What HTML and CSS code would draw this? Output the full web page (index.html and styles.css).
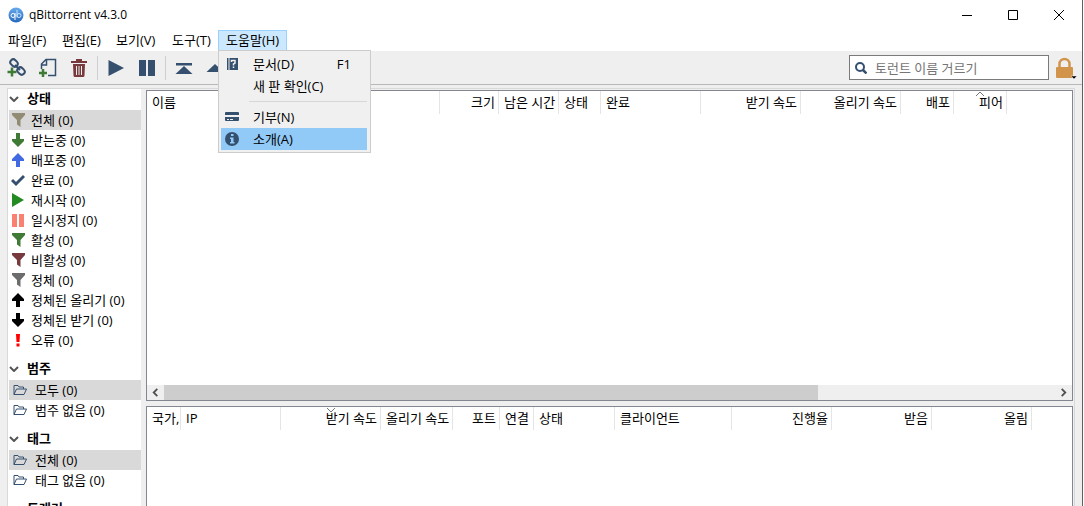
FILE: index.html
```html
<!DOCTYPE html>
<html lang="ko">
<head>
	<meta charset="UTF-8">
	<title>qBittorrent v4.3.0</title>
	<link rel="stylesheet" href="styles.css">
</head>

<body>
	<!-- 공용 아이콘 -->
	<svg class="sprite" aria-hidden="true">
		<symbol id="i-filter" viewBox="0 0 14 14"><path d="M1 0h13v2L9.500 7v7L6 11.500V7L1 2z"/></symbol>
		<symbol id="i-down" viewBox="0 0 14 14"><path d="M5 0h4v6h4v2l-6 6-6-6V6h4z"/></symbol>
		<symbol id="i-up" viewBox="0 0 14 14"><path d="M5 14h4V8h4V6L7 0 1 6v2h4z"/></symbol>
		<symbol id="i-folder" viewBox="0 0 14 14"><path d="M1 11.500V2.500h4l1 1.500h4.500V6M1 11.500L3.500 6h10L11 11.500z" fill="none" stroke="currentColor" stroke-linejoin="round"/></symbol>
		<symbol id="i-arrow" viewBox="0 0 10 6"><path d="M1 1l4 4 4-4" fill="none" stroke="currentColor" stroke-width="2"/></symbol>
	</svg>

	<div class="window">
		<header class="titlebar">
			<svg class="logo" viewBox="0 0 16 16">
				<defs><linearGradient id="lg" x2="0" y2="1"><stop offset="0" stop-color="#68aaed"/><stop offset="1" stop-color="#2869bd"/></linearGradient></defs>
				<circle cx="8" cy="8" r="7.500" fill="url(#lg)"/>
				<circle cx="5" cy="8.500" r="2" fill="none" stroke="#fff"/>
				<path d="M7 6v7" stroke="#fff"/>
				<circle cx="11" cy="8.500" r="2" fill="none" stroke="#c8e8ff"/>
				<path d="M9 3v7.500" stroke="#c8e8ff"/>
			</svg>
			<h1 class="title">qBittorrent v4.3.0</h1>
			<button class="win-btn" aria-label="최소화"><svg viewBox="0 0 10 10"><path d="M0 5.500h10"/></svg></button>
			<button class="win-btn" aria-label="최대화"><svg viewBox="0 0 10 10"><path d="M.5.5h9v9h-9z"/></svg></button>
			<button class="win-btn" aria-label="닫기"><svg viewBox="0 0 10 10"><path d="M0 0l10 10M10 0L0 10"/></svg></button>
		</header>

		<nav class="menubar">
			<button class="menu-btn">파일(F)</button>
			<button class="menu-btn">편집(E)</button>
			<button class="menu-btn">보기(V)</button>
			<button class="menu-btn">도구(T)</button>
			<div class="menu-open">
				<button class="menu-btn active">도움말(H)</button>
				<div class="dropdown">
					<button class="drop-item">
						<svg viewBox="0 0 14 14"><path d="M2 1h11v12H2z"/><path d="M4 1v12" stroke="#f0f0f0"/><path d="M6.500 5V3.500h3.500V6L8.500 7v1.500M8.500 9.500V11" fill="none" stroke="#f0f0f0" stroke-width="1.500"/></svg>
						<span>문서(D)</span><kbd>F1</kbd>
					</button>
					<button class="drop-item"><i class="no-icon"></i><span>새 판 확인(C)</span></button>
					<hr class="drop-line">
					<button class="drop-item">
						<svg viewBox="0 0 14 14"><path d="M0 3q0-1 1-1h12q1 0 1 1v2H0zM0 7h14v3q0 1-1 1H1q-1 0-1-1z"/><path d="M2 9.500h2M5 9.500h3" stroke="#f0f0f0"/></svg>
						<span>기부(N)</span>
					</button>
					<button class="drop-item selected">
						<svg viewBox="0 0 14 14"><circle cx="7" cy="7" r="7"/><path d="M6 2h2.500v2H6zM5 5.500h3.500v4.500h1v1.500H5V10h1V7H5z" fill="#91c9f7"/></svg>
						<span>소개(A)</span>
					</button>
				</div>
			</div>
		</nav>

		<div class="toolbar">
			<button class="tool" aria-label="토렌트 링크 추가"><svg viewBox="0 0 20 20">
				<g fill="none" stroke="#35506f" stroke-width="2"><rect x="3" y="2" width="8" height="6" rx="3" transform="rotate(45 7 5)"/><rect x="10" y="10" width="8" height="6" rx="3" transform="rotate(45 14 13)"/><path d="M8 7l5 5"/></g>
				<path d="M5 9.500v9M.5 14h9" stroke="#3f7b36" stroke-width="2.500"/>
			</svg></button>
			<button class="tool" aria-label="토렌트 파일 추가"><svg viewBox="0 0 20 20">
				<path d="M3.500 11V6L8 1.500h9.500v16H10M8.500 2v5H3.500" fill="none" stroke="#35506f" stroke-width="1.500"/>
				<path d="M5 11v8M1 15h8" stroke="#3f7b36" stroke-width="2.500"/>
			</svg></button>
			<button class="tool" aria-label="삭제"><svg viewBox="0 0 20 20">
				<path d="M2 3h5V1h6v2h5v2H2zM4 6h12l-.5 11.500q0 1.500-1.500 1.500H6q-1.500 0-1.500-1.500z" fill="#783a3d"/>
				<path d="M7.500 8v9M10 8v9M12.500 8v9" stroke="#efefef"/>
			</svg></button>
			<i class="tool-line"></i>
			<button class="tool" aria-label="재시작"><svg viewBox="0 0 20 20"><path d="M2.500 2L18 10 2.500 18z"/></svg></button>
			<button class="tool" aria-label="일시정지"><svg viewBox="0 0 20 20"><path d="M2 2h7v16H2zM11 2h7v16h-7z"/></svg></button>
			<i class="tool-line"></i>
			<button class="tool" aria-label="맨 위로"><svg viewBox="0 0 20 20"><path d="M2 5h16v2.500H2zM10 8l8.500 8h-17z"/></svg></button>
			<button class="tool" aria-label="위로"><svg viewBox="0 0 20 20"><path d="M10 6l8.500 8h-17z"/></svg></button>
			<label class="search">
				<svg viewBox="0 0 12 12"><circle cx="5" cy="5" r="4" fill="none" stroke="#35506f" stroke-width="2"/><path d="M8 8l3.500 3.500" stroke="#35506f" stroke-width="2.500"/></svg>
				<input type="text" placeholder="토런트 이름 거르기" aria-label="토런트 이름 거르기">
			</label>
			<button class="lock" aria-label="잠금"><svg viewBox="0 0 22 22">
				<path d="M4.500 11V7a5 5 0 0 1 10 0v4" fill="none" stroke="#d2944a" stroke-width="2.500"/>
				<rect x="1" y="10" width="17" height="11" rx="1" fill="#d2944a"/>
				<path d="M16 19h6l-3 3z" fill="#000" stroke="#efefef" stroke-width=".5"/>
			</svg></button>
		</div>

		<main class="main">
			<aside class="sidebar">
				<section class="group">
					<h2><svg><use href="#i-arrow"/></svg>상태</h2>
					<button class="side-item current"><svg color="#918b74"><use href="#i-filter"/></svg>전체 (0)</button>
					<button class="side-item"><svg color="#3f7b36"><use href="#i-down"/></svg>받는중 (0)</button>
					<button class="side-item"><svg color="#4169e1"><use href="#i-up"/></svg>배포중 (0)</button>
					<button class="side-item"><svg color="#35506f" viewBox="0 0 14 14"><path d="M1 7l4 4 8-8" fill="none" stroke="currentColor" stroke-width="3"/></svg>완료 (0)</button>
					<button class="side-item"><svg color="#228b22" viewBox="0 0 14 14"><path d="M1 0l12 7-12 7z"/></svg>재시작 (0)</button>
					<button class="side-item"><svg color="#fa8072" viewBox="0 0 14 14"><path d="M1 1h5v13H1zM8 1h5v13H8z"/></svg>일시정지 (0)</button>
					<button class="side-item"><svg color="#3f7b36"><use href="#i-filter"/></svg>활성 (0)</button>
					<button class="side-item"><svg color="#783a3d"><use href="#i-filter"/></svg>비활성 (0)</button>
					<button class="side-item"><svg color="#6c6c6c"><use href="#i-filter"/></svg>정체 (0)</button>
					<button class="side-item"><svg color="#000"><use href="#i-up"/></svg>정체된 올리기 (0)</button>
					<button class="side-item"><svg color="#000"><use href="#i-down"/></svg>정체된 받기 (0)</button>
					<button class="side-item"><svg color="#f00" viewBox="0 0 14 14"><path d="M5 1h4l-.5 8h-3zM5.500 10.500h3v3h-3z"/></svg>오류 (0)</button>
				</section>
				<section class="group folders">
					<h2><svg><use href="#i-arrow"/></svg>범주</h2>
					<button class="side-item current"><svg><use href="#i-folder"/></svg>모두 (0)</button>
					<button class="side-item"><svg><use href="#i-folder"/></svg>범주 없음 (0)</button>
				</section>
				<section class="group folders">
					<h2><svg><use href="#i-arrow"/></svg>태그</h2>
					<button class="side-item current"><svg><use href="#i-folder"/></svg>전체 (0)</button>
					<button class="side-item"><svg><use href="#i-folder"/></svg>태그 없음 (0)</button>
				</section>
				<section class="group">
					<h2><svg><use href="#i-arrow"/></svg>트래커</h2>
				</section>
			</aside>

			<div class="content">
				<div class="panel torrents">
					<table>
						<colgroup><col class="w-name"><col class="w-size"><col class="w-eta"><col class="w-state"><col class="w-l"><col class="w-l"><col class="w-l"><col class="w-peer"><col class="w-peer"><col></colgroup>
						<thead>
							<tr>
								<th>이름</th>
								<th class="num">크기</th>
								<th>남은 시간</th>
								<th>상태</th>
								<th>완료</th>
								<th class="num">받기 속도</th>
								<th class="num">올리기 속도</th>
								<th class="num">배포</th>
								<th class="num">피어<svg class="sort" viewBox="0 0 10 6"><path d="M1 5l4-4 4 4"/></svg></th>
								<td></td>
							</tr>
						</thead>
					</table>
					<div class="scroll">
						<svg viewBox="0 0 10 10"><path d="M7 1L3 5l4 4"/></svg>
						<div class="track"><div class="thumb"></div></div>
						<svg viewBox="0 0 10 10"><path d="M3 1l4 4-4 4"/></svg>
					</div>
				</div>
				<div class="panel peers">
					<table>
						<colgroup><col class="w-flag"><col class="w-l"><col class="w-l"><col class="w-up"><col class="w-port"><col class="w-flag"><col class="w-flags"><col class="w-client"><col class="w-l"><col class="w-l"><col class="w-l"><col></colgroup>
						<thead>
							<tr>
								<th>국가,</th>
								<th>IP</th>
								<th class="num">받기 속도<svg class="sort" viewBox="0 0 10 6"><path d="M1 1l4 4 4-4"/></svg></th>
								<th class="num">올리기 속도</th>
								<th class="num">포트</th>
								<th>연결</th>
								<th>상태</th>
								<th>클라이언트</th>
								<th class="num">진행율</th>
								<th class="num">받음</th>
								<th class="num">올림</th>
								<td></td>
							</tr>
						</thead>
					</table>
				</div>
			</div>
		</main>
	</div>
</body>
</html>
```
FILE: styles.css
```css
* {
	box-sizing: border-box;
}

body {
	margin: 0;
	background: #fff;
	color: #000;
	font: 13px/20px "Open Sans", "Noto Sans CJK KR", sans-serif;
}

button, input {
	margin: 0;
	padding: 0;
	border: 0;
	background: none;
	color: inherit;
	font: inherit;
}

svg {
	flex: none;
	fill: currentColor;
}

.sprite {
	position: absolute;
	width: 0;
	height: 0;
}

.window {
	display: flex;
	flex-direction: column;
	height: 100vh;
	margin-right: 1px;
	border-right: 1px solid #606060;
	overflow: hidden;
}

/* 제목 표시줄 */
.titlebar {
	display: flex;
	align-items: center;
	height: 30px;
	padding-left: 8px;
}

.logo {
	width: 16px;
	height: 16px;
}

.title {
	flex: 1;
	margin: 0 0 0 5px;
	font-size: 12px;
	font-weight: normal;
}

.win-btn {
	display: flex;
	align-items: center;
	justify-content: center;
	width: 46px;
	height: 28px;
}

.win-btn svg {
	width: 10px;
	height: 10px;
	fill: none;
	stroke: #000;
}

/* 메뉴 */
.menubar {
	display: grid;
	grid-template-columns: 54px 54px 56px 54px 69px;
	height: 21px;
}

.menu-btn {
	width: 100%;
	height: 21px;
	padding: 0 0 2px 8px;
	line-height: 18px;
	text-align: left;
	white-space: nowrap;
}

.menu-btn.active {
	padding: 0 0 2px 7px;
	border: 1px solid #99d1ff;
	background: #cce8ff;
}

.menu-open {
	position: relative;
}

.dropdown {
	position: absolute;
	z-index: 10;
	top: 20px;
	left: 0;
	width: 153px;
	padding: 2px 3px 2px 2px;
	border: 1px solid #ccc;
	background: #f0f0f0;
}

.drop-item {
	display: flex;
	align-items: center;
	width: 100%;
	height: 22px;
	padding: 0 16px 0 4px;
	text-align: left;
}

.drop-item svg, .no-icon {
	width: 14px;
	height: 14px;
	margin-right: 14px;
	color: #35506f;
}

.drop-item span {
	flex: 1;
}

.drop-item kbd {
	font: inherit;
}

.drop-item.selected {
	background: #91c9f7;
}

.drop-line {
	margin: 4px 0 4px 28px;
	border: 0;
	border-top: 1px solid #d7d7d7;
}

/* 도구 모음 */
.toolbar {
	display: flex;
	align-items: center;
	height: 34px;
	padding: 0 5px 0 1px;
	border-bottom: 1px solid #b8b8b8;
	background: #efefef;
}

.tool {
	display: flex;
	justify-content: center;
	width: 31px;
	color: #35506f;
}

.tool svg {
	width: 20px;
	height: 20px;
}

.tool-line {
	width: 1px;
	height: 24px;
	margin: 0 2px 0 3px;
	background: #cfcfcf;
}

.search {
	display: flex;
	align-items: center;
	width: 200px;
	height: 25px;
	margin-left: auto;
	padding-left: 5px;
	border: 1px solid #7a7a7a;
	background: #fff;
}

.search svg {
	width: 12px;
	height: 12px;
}

.search input {
	flex: 1;
	min-width: 0;
	margin-left: 8px;
	outline: none;
}

.search input::placeholder {
	color: #757575;
}

.lock {
	display: flex;
	margin-left: 6px;
}

.lock svg {
	width: 22px;
	height: 22px;
}

/* 본문 */
.main {
	display: flex;
	flex: 1;
	min-height: 0;
	margin-right: 7px;
	padding: 3px 0 0 7px;
	background: #efefef;
	box-shadow: 7px 0 #efefef;
}

.sidebar {
	width: 134px;
	padding: 0 0 0 1px;
	border: 1px solid #d9d9d9;
	border-width: 1px 0 0 1px;
	background: #fff;
	overflow: hidden;
}

.group {
	margin-bottom: 9px;
}

.group h2 {
	display: flex;
	align-items: center;
	height: 21px;
	margin: 0;
	padding-bottom: 2px;
	font-size: 13px;
	line-height: 19px;
}

.group h2 svg {
	width: 10px;
	height: 6px;
	margin-right: 8px;
	color: #555;
}

.side-item {
	display: flex;
	align-items: center;
	width: 100%;
	height: 20px;
	padding-left: 2px;
	white-space: nowrap;
}

.side-item svg {
	width: 14px;
	height: 14px;
	margin-right: 6px;
}

.folders .side-item {
	padding-left: 4px;
}

.folders .side-item svg {
	margin-right: 8px;
	color: #35506f;
}

.side-item.current {
	background: #d9d9d9;
}

.content {
	display: flex;
	flex: 1;
	flex-direction: column;
	gap: 5px;
	min-width: 0;
	padding: 1px 1px 0 5px;
	border: 1px solid #d9d9d9;
	border-width: 1px 1px 0 0;
}

.panel {
	border: 1px solid #828790;
	background: #fff;
	overflow: hidden;
}

.torrents {
	display: flex;
	flex: none;
	flex-direction: column;
	justify-content: space-between;
	height: 311px;
}

.peers {
	flex: 1;
	border-bottom: 0;
}

table {
	width: 100%;
	border-collapse: separate;
	border-spacing: 0;
	table-layout: fixed;
}

th, td {
	position: relative;
	height: 23px;
	padding: 0 3px 2px 5px;
	font-weight: normal;
	text-align: left;
	white-space: nowrap;
	overflow: hidden;
}

th {
	border-right: 1px solid #e5e5e5;
}

.num {
	text-align: right;
}

.sort {
	position: absolute;
	top: 0;
	left: calc(50% - 5px);
	width: 10px;
	height: 6px;
	fill: none;
	stroke: #777;
}

.w-name { width: 293px; }
.w-size { width: 59px; }
.w-eta { width: 60px; }
.w-state { width: 42px; }
.w-l { width: 100px; }
.w-peer { width: 53px; }
.w-flag { width: 34px; }
.w-up { width: 72px; }
.w-port { width: 47px; }
.w-flags { width: 81px; }
.w-client { width: 117px; }

/* 가로 스크롤 */
.scroll {
	display: flex;
	align-items: center;
	height: 15px;
	background: #efefef;
}

.scroll svg {
	width: 17px;
	height: 9px;
	fill: none;
	stroke: #505050;
	stroke-width: 2;
}

.track {
	flex: 1;
	height: 15px;
}

.thumb {
	width: 73.4%;
	height: 15px;
	background: #cdcdcd;
}
```
